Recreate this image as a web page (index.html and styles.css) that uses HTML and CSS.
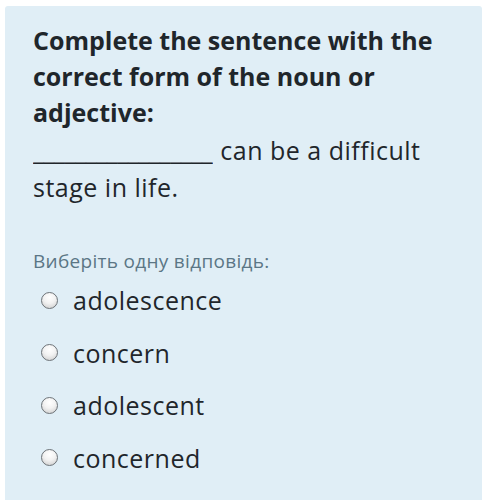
FILE: index.html
```
<!DOCTYPE html>
<html>
<head>
<meta charset="utf-8">
<link rel="stylesheet" href="styles.css">
</head>
<body>
<div class="panel">
  <div class="question">
    <p class="title">Complete the sentence with the correct form of the noun or adjective:</p>
    <p class="sentence"><span class="blank">_________________</span> can be a difficult stage in life.</p>
  </div>
  <div class="answers">
    <p class="prompt">Виберіть одну відповідь:</p>
    <label class="option"><span class="radio"></span><span class="label">adolescence</span></label>
    <label class="option"><span class="radio"></span><span class="label">concern</span></label>
    <label class="option"><span class="radio"></span><span class="label">adolescent</span></label>
    <label class="option"><span class="radio"></span><span class="label">concerned</span></label>
  </div>
</div>
</body>
</html>
```
FILE: styles.css
```
html, body {
  margin: 0;
  padding: 0;
  background: #ffffff;
}
body {
  font-family: "Open Sans", "Noto Sans", sans-serif;
  color: #1f262b;
  width: 500px;
  height: 500px;
  overflow: hidden;
}
.panel {
  margin: 6px 0 0 5px;
  width: 477px;
  height: 494px;
  background: #e0eef6;
  border-radius: 3px 3px 0 0;
  box-sizing: border-box;
  padding: 16px 18px 0 28px;
}
.question p {
  margin: 0;
}
.title {
  font-weight: 700;
  font-size: 25px;
  line-height: 36px;
}
.question .sentence {
  margin-top: 2px;
  font-size: 25px;
  line-height: 37px;
  letter-spacing: 0.5px;
}
.blank {
  display: inline-block;
  letter-spacing: -0.4px;
  padding-right: 1px;
  overflow: hidden;
  vertical-align: top;
}
.answers {
  margin-top: 43px;
}
.prompt {
  margin: 0 0 1px 0;
  font-size: 19px;
  line-height: 24px;
  letter-spacing: 0.3px;
  color: #5b7685;
}
.option {
  display: flex;
  align-items: center;
  gap: 15px;
  height: 52.5px;
  padding-left: 8px;
  font-size: 25px;
  letter-spacing: 0.5px;
}
.radio {
  width: 15px;
  height: 15px;
  border-radius: 50%;
  border: 1.5px solid #6d7378;
  background: radial-gradient(circle at 50% 30%, #ffffff 0%, #f2f2f2 45%, #c9c9c9 100%);
  flex: none;
}
```
